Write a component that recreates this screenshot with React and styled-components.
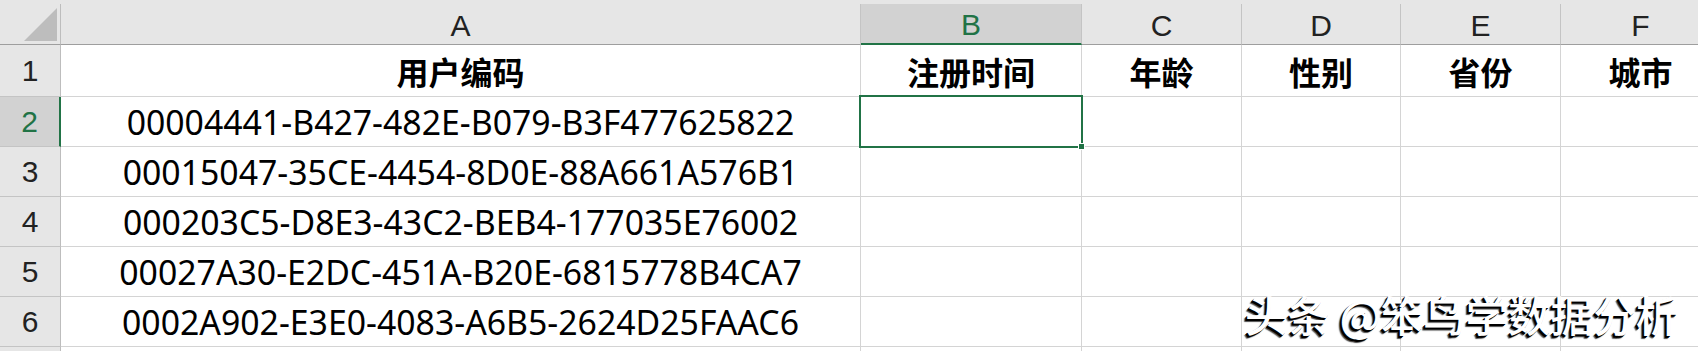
import React from 'react';
import styled, { createGlobalStyle } from 'styled-components';

const GlobalStyle = createGlobalStyle`
  html, body {
    margin: 0;
    padding: 0;
    background: #fff;
    overflow: hidden;
  }
`;

const GREEN = '#217346';

const columns = [
  { key: 'A', width: 800, title: '用户编码' },
  { key: 'B', width: 221, title: '注册时间' },
  { key: 'C', width: 160, title: '年龄' },
  { key: 'D', width: 159, title: '性别' },
  { key: 'E', width: 160, title: '省份' },
  { key: 'F', width: 160, title: '城市' },
];

const ids = [
  '00004441-B427-482E-B079-B3F477625822',
  '00015047-35CE-4454-8D0E-88A661A576B1',
  '000203C5-D8E3-43C2-BEB4-177035E76002',
  '00027A30-E2DC-451A-B20E-6815778B4CA7',
  '0002A902-E3E0-4083-A6B5-2624D25FAAC6',
];

const Page = styled.div`
  position: relative;
  width: 1698px;
  height: 351px;
  overflow: hidden;
  background: #fff;
`;

const TopStrip = styled.div`
  height: 4px;
  background: #e6e6e6;
`;

const Sheet = styled.div`
  display: grid;
  grid-template-columns: 61px ${columns.map((c) => c.width + 'px').join(' ')};
  grid-template-rows: 41px 52px repeat(6, 50px);
`;

const Corner = styled.div`
  position: relative;
  background: #e6e6e6;
  border-right: 1px solid #bdbdbd;
  border-bottom: 1px solid #9e9e9e;

  &::after {
    content: '';
    position: absolute;
    right: 3px;
    bottom: 3px;
    width: 0;
    height: 0;
    border-style: solid;
    border-width: 0 0 33px 33px;
    border-color: transparent transparent #bdbdbd transparent;
  }
`;

const ColHead = styled.div`
  display: flex;
  align-items: center;
  justify-content: center;
  padding-top: 3px;
  background: ${(p) => (p.$active ? '#d2d2d2' : '#e6e6e6')};
  border-right: 1px solid #c4c4c4;
  border-bottom: ${(p) => (p.$active ? `2px solid ${GREEN}` : '1px solid #9e9e9e')};
  color: ${(p) => (p.$active ? GREEN : '#222')};
  font-family: 'Liberation Sans', Arial, sans-serif;
  font-size: 30px;
`;

const RowHead = styled.div`
  display: flex;
  align-items: center;
  justify-content: center;
  background: ${(p) => (p.$active ? '#d2d2d2' : '#e6e6e6')};
  border-right: ${(p) => (p.$active ? `2px solid ${GREEN}` : '1px solid #bdbdbd')};
  border-bottom: 1px solid #c4c4c4;
  color: ${(p) => (p.$active ? GREEN : '#222')};
  font-family: 'Liberation Sans', Arial, sans-serif;
  font-size: 30px;
`;

const Cell = styled.div`
  position: relative;
  display: flex;
  align-items: center;
  justify-content: center;
  border-right: 1px solid #d4d4d4;
  border-bottom: 1px solid #d4d4d4;
  color: #000;
  white-space: nowrap;
  font-family: ${(p) =>
    p.$bold ? "'Noto Sans CJK SC', sans-serif" : "'Noto Sans', 'Noto Sans CJK SC', sans-serif"};
  font-weight: ${(p) => (p.$bold ? 700 : 400)};
  font-size: ${(p) => (p.$bold ? '32px' : '33.8px')};
`;

const Selection = styled.div`
  position: absolute;
  left: -2px;
  top: -2px;
  right: -2px;
  bottom: -2px;
  border: 2px solid ${GREEN};
  pointer-events: none;
  z-index: 2;

  &::after {
    content: '';
    position: absolute;
    right: -4px;
    bottom: -4px;
    width: 5px;
    height: 5px;
    background: ${GREEN};
    border: 1px solid #fff;
  }
`;

const Watermark = styled.div`
  position: absolute;
  left: 1245px;
  top: 293px;
  color: #fff;
  font-family: 'Noto Sans CJK SC', sans-serif;
  font-weight: 500;
  font-size: 42.5px;
  line-height: 1;
  white-space: nowrap;
  text-shadow: -2px 2px 0 #000, -3px 3px 1px rgba(0, 0, 0, 0.7), -1px 1px 0 #000;
`;

export default function App() {
  const rows = [...ids, null];
  return (
    <Page>
      <GlobalStyle />
      <TopStrip />
      <Sheet>
        <Corner />
        {columns.map((c) => (
          <ColHead key={c.key} $active={c.key === 'B'}>
            {c.key}
          </ColHead>
        ))}

        <RowHead>1</RowHead>
        {columns.map((c) => (
          <Cell key={c.key} $bold>
            {c.title}
          </Cell>
        ))}

        {rows.map((id, i) => {
          const row = i + 2;
          return (
            <React.Fragment key={row}>
              {/* last row is mostly below the fold, so no label shows */}
              <RowHead $active={row === 2}>{id !== null ? row : ''}</RowHead>
              {columns.map((c) => (
                <Cell key={c.key}>
                  {c.key === 'A' && id ? id : null}
                  {c.key === 'B' && row === 2 ? <Selection /> : null}
                </Cell>
              ))}
            </React.Fragment>
          );
        })}
      </Sheet>
      <Watermark>头条 @笨鸟学数据分析</Watermark>
    </Page>
  );
}
